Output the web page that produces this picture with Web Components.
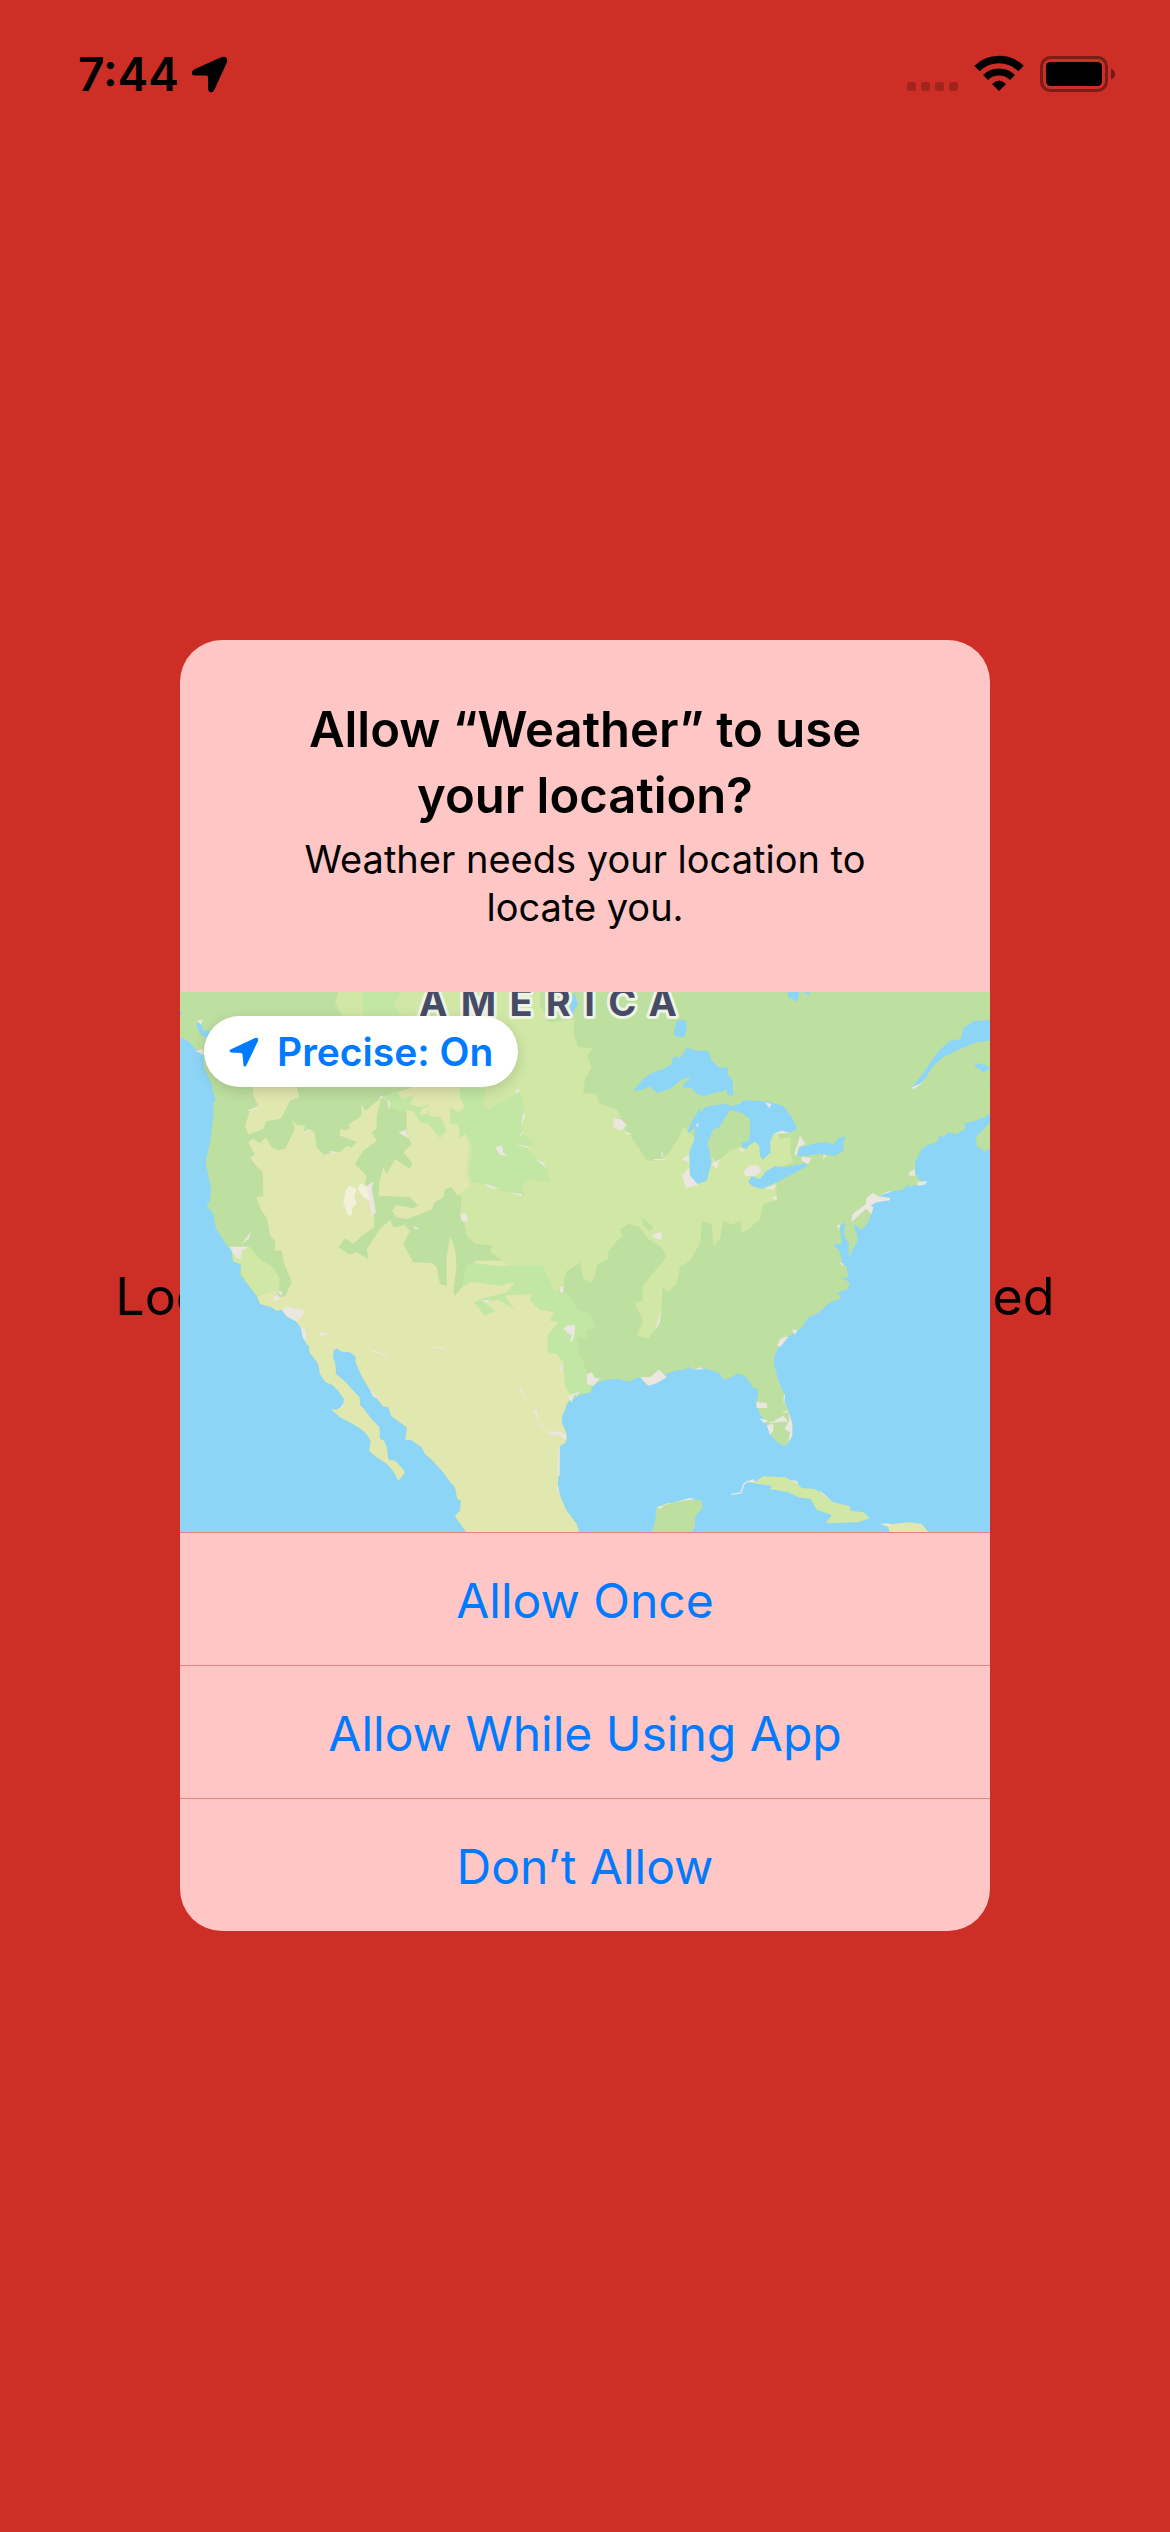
<!DOCTYPE html>
<html lang="en">
<head>
<meta charset="utf-8">
<meta name="viewport" content="width=device-width, initial-scale=1">
<title>Weather</title>
<style>
  body { margin: 0; font-family: Inter, "Liberation Sans", sans-serif; color: #000; background: #cd2f27; }
</style>
</head>
<body>
<weather-screen>
  <status-bar slot="status" time="7:44"></status-bar>
  <span slot="message">Location permission is not determined</span>
  <permission-alert slot="alert">
    <span slot="title">Allow “Weather” to use your location?</span>
    <span slot="detail">Weather needs your location to locate you.</span>
    <location-map slot="map"></location-map>
    <alert-action slot="actions">Allow Once</alert-action>
    <alert-action slot="actions">Allow While Using App</alert-action>
    <alert-action slot="actions">Don’t Allow</alert-action>
  </permission-alert>
</weather-screen>

<script>
const define = (name, html) => customElements.define(name, class extends HTMLElement {
  constructor() {
    super();
    const template = document.createElement('template');
    template.innerHTML = html;
    this.attachShadow({ mode: 'open' }).append(template.content.cloneNode(true));
    const time = this.shadowRoot.querySelector('time');
    if (time) time.textContent = this.getAttribute('time');
  }
});

define('weather-screen', `
<style>
  :host { display: flex; flex-direction: column; min-height: 100vh; }
  main { flex: 1; display: grid; place-items: center; padding-bottom: 102px; }
  .message, .alert { grid-area: 1 / 1; }
  .message { margin: 0; padding-top: 22px; font-size: 52px; line-height: 60px; text-align: center; white-space: nowrap; }
  .alert { width: 100%; max-width: 810px; z-index: 1; }
</style>
<slot name="status"></slot>
<main>
  <p class="message"><slot name="message"></slot></p>
  <div class="alert"><slot name="alert"></slot></div>
</main>`);

define('status-bar', `
<style>
  :host { display: block; }
  header { box-sizing: border-box; height: 141px; padding: 44px 54px 0 78px; display: flex; justify-content: space-between; align-items: flex-start; }
  .group { display: flex; align-items: center; height: 60px; }
  time { font-size: 46px; line-height: 60px; font-weight: 600; }
  .arrow { margin-left: 12px; }
  svg { display: block; }
</style>
<header>
  <div class="group">
    <time></time>
    <svg class="arrow" width="37" height="37" viewBox="0 0 37 37"><path d="M3 13.500 29.500 1.500Q37-1 36 6L23.500 33.500Q22 37 19 36 17 35.500 17 32V21Q17 19.500 15.500 19.500H4Q1 19.500.8 17 .8 14.500 3 13.500Z"/></svg>
  </div>
  <svg width="210" height="60" viewBox="906 44 210 60">
    <g fill="#000" fill-opacity=".21"><rect x="907" y="82" width="9" height="9" rx="2.500"/><rect x="921" y="82" width="9" height="9" rx="2.500"/><rect x="935" y="82" width="9" height="9" rx="2.500"/><rect x="949" y="82" width="9" height="9" rx="2.500"/></g>
    <g fill="none" stroke="#000"><path d="M977 68.500A31.500 31.500 0 0 1 1021 68.500" stroke-width="7.500"/><path d="M985.500 77.500A19.500 19.500 0 0 1 1012.500 77.500" stroke-width="7"/></g>
    <path d="M992 84Q999 77 1006 84L999 91Z"/>
    <rect x="1041.500" y="57.500" width="65" height="33" rx="9" fill="none" stroke="#000" stroke-opacity=".4" stroke-width="3"/>
    <rect x="1046" y="62" width="56" height="24" rx="4.500"/>
    <path d="M1111 68.500Q1115 70 1115 74T1111 79.500Z" fill-opacity=".45"/>
  </svg>
</header>`);

define('permission-alert', `
<style>
  :host { display: block; }
  section { border-radius: 42px; overflow: hidden; background: #fec6c4; }
  header { display: flex; flex-direction: column; align-items: center; gap: 6px; padding: 57px 24px 61px; text-align: center; }
  h1, p { margin: 0; max-width: 600px; }
  h1 { font-size: 49px; line-height: 66px; font-weight: 600; }
  p { font-size: 38px; line-height: 48px; }
</style>
<section role="alertdialog" aria-labelledby="title" aria-describedby="detail">
  <header>
    <h1 id="title"><slot name="title"></slot></h1>
    <p id="detail"><slot name="detail"></slot></p>
  </header>
  <slot name="map"></slot>
  <slot name="actions"></slot>
</section>`);

define('alert-action', `
<style>
  :host { display: block; }
  button { display: block; box-sizing: border-box; width: 100%; margin: 0; padding: 38px 24px 34px; border: 0; border-top: 1px solid #e28481; background: none; color: #007aff; font: inherit; font-size: 48px; line-height: 60px; }
</style>
<button type="button"><slot></slot></button>`);

define('location-map', `
<style>
  :host { display: grid; }
  svg.map { grid-area: 1 / 1; display: block; width: 100%; height: auto; }
  button { grid-area: 1 / 1; place-self: start; z-index: 1; display: flex; align-items: center; gap: 18px; margin: 24px; padding: 12px 25px; border: 0; border-radius: 36px; background: #fff; color: #007aff; box-shadow: 0 4px 14px rgb(0 0 0 / .14); font: inherit; font-size: 39px; line-height: 47px; font-weight: 600; }
</style>
<svg class="map" viewBox="0 9 2430 1620" role="img" aria-label="Map of North America">
  <rect y="9" width="2430" height="1620" fill="#8dd5f7"/>
  <path fill="#bddf9f" d="M0 9V145L28 158 50 185 70 197 72 235 95 285 98 305 108 333 100 338 100 380 95 420 92 450 77 520 85 560 94 600 90 635 80 650 100 675 108 720 138 765 155 785 158 815 183 826 180 858 200 882 228 918 240 945 275 955 290 965 305 962 320 982 350 998 365 1020 380 1065 388 1072 388 1090 415 1125 420 1155 437 1180 458 1188 475 1205 492 1230 490 1250 470 1262 453 1260 480 1285 515 1303 540 1318 560 1335 572 1355 568 1385 590 1405 618 1422 640 1447 655 1475 672 1455 673 1445 645 1415 625 1412 620 1375 612 1355 600 1350 598 1315 570 1285 550 1258 541 1250 538 1225 520 1205 497 1180 468 1155 466 1125 459 1105 460 1085 470 1078 485 1088 510 1090 527 1103 527 1120 545 1162 565 1195 590 1228 608 1252 625 1255 633 1280 660 1300 680 1315 680 1325 676 1352 693 1353 725 1375 735 1395 755 1412 790 1450 810 1478 825 1495 832 1530 843 1535 840 1565 825 1582 858 1629H1197L1190 1605 1160 1565 1142 1525 1133 1490 1137 1440 1138 1372 1155 1362 1160 1350 1158 1330 1145 1300 1146 1280 1155 1262 1160 1245 1180 1230 1200 1218 1232 1210 1240 1190 1258 1178 1275 1173 1310 1169 1350 1178 1365 1168 1385 1165 1400 1188 1430 1180 1450 1158 1485 1145 1520 1140 1525 1130 1530 1140 1570 1138 1600 1145 1620 1155 1632 1172 1650 1167 1670 1155 1685 1156 1700 1167 1718 1195 1733 1200 1735 1215 1728 1245 1740 1275 1762 1305 1770 1335 1790 1358 1812 1372 1825 1362 1837 1330 1837 1305 1825 1262 1812 1235 1813 1215 1795 1175 1782 1125 1782 1105 1795 1075 1825 1043 1867 1015 1885 985 1915 972 1950 940 1980 930 1982 920 1970 915 1985 905 2000 903 2010 885 1998 873 1980 870 2005 865 2000 835 1985 820 1985 808 2005 806 2033 755 2030 735 2020 705 2045 722 2065 700 2080 655 2070 645 2095 635 2130 632 2120 625 2095 622 2120 608 2165 603 2182 590 2185 580 2188 595 2215 585 2240 580 2220 575 2205 550 2205 520 2225 480 2242 469 2270 460 2280 437 2290 445 2305 430 2330 435 2355 420 2355 402 2395 393 2430 375V9Z"/>
  <path fill="#bddf9f" d="M2430 402 2405 425 2388 445 2390 470 2415 488 2430 478ZM1415 1629 1425 1600 1430 1555 1455 1545 1530 1530 1565 1535 1568 1555 1545 1585 1545 1610 1535 1629Z"/>
  <path fill="#d0e7a5" d="M1705 1480 1730 1475 1750 1462 1815 1465 1850 1482 1865 1497 1905 1500 1960 1540 2010 1552 2012 1565 2050 1570 2070 1588 2035 1600 1938 1603 1955 1578 1910 1562 1892 1530 1855 1525 1825 1510 1770 1500 1775 1490 1735 1485ZM155 785 190 775 210 775 240 810 280 835 300 870 295 910 230 918 200 882 183 850 183 826 160 818Z"/>
  <path fill="#e0e7af" d="M2100 1605 2135 1605 2190 1600 2225 1605 2245 1629H2128L2125 1615ZM220 295H350L358 325 330 335 310 375 300 390 258 397 250 420 205 437 195 410 210 365 235 350 220 320Z"/>
  <path fill="#e0e7af" d="M205 460 218 450 240 462 258 445 275 475 295 483 315 480 345 420 335 390 350 408 375 410 372 430 395 422 405 435 410 475 432 498 460 488 478 490 500 470 515 475 530 458 480 440 480 420 500 425 513 410 500 410 545 380 543 345 557 365 605 325 700 295H840L870 430 890 580 840 620 830 700 850 800 950 815H1130V930L1155 1090 1175 1220 1160 1245 1155 1262 1146 1280 1145 1300 1158 1330 1160 1350 1155 1362 1138 1372 1137 1440 1133 1490 1142 1525 1160 1565 1190 1605 1197 1629H858L825 1582 840 1565 843 1535 832 1530 825 1495 810 1478 790 1450 755 1412 735 1395 725 1375 693 1353 676 1352 680 1325 680 1315 660 1300 633 1280 625 1255 608 1252 590 1228 565 1195 545 1162 527 1120 527 1103 510 1090 485 1088 470 1078 460 1085 459 1105 466 1125 468 1155 497 1180 520 1205 538 1225 541 1250 550 1258 570 1285 598 1315 600 1350 612 1355 620 1375 625 1412 645 1415 673 1445 672 1455 655 1475 640 1447 618 1422 590 1405 568 1385 572 1355 560 1335 540 1318 515 1303 480 1285 453 1260 470 1262 490 1250 492 1230 475 1205 458 1188 437 1180 420 1155 415 1125 388 1090 388 1072 380 1065 365 1020 350 998 320 982 305 962 290 965 275 955 240 945 232 920 285 905 300 925 315 922 335 880 310 815 305 785 285 785 285 755 270 740 262 690 245 665 228 625 250 620 248 550 220 520 210 505 225 498Z"/>
  <path fill="#d0e7a5" d="M475 9 465 40 485 80 800 85 840 295 870 430 860 560 870 590 830 620 845 690 860 740 885 765 935 770 930 790 990 830 1100 830 1100 860 1130 905 1150 900 1155 850 1200 820 1210 870 1232 883 1245 860 1250 825 1285 810 1285 790 1320 745 1330 745 1320 720 1345 705 1375 712 1410 755 1440 770 1460 800 1450 815 1388 890 1388 935 1363 940 1390 995 1370 1040 1405 1048 1430 1015 1445 960 1447 895 1465 908 1490 885 1500 835 1530 815 1562 760 1565 695 1595 705 1600 770 1620 750 1630 695 1655 708 1680 695 1685 730 1700 725 1740 690 1750 645 1785 635 1790 600 1780 540 1840 520 1830 490 1832 445 1800 450 1790 425 1760 440 1650 485 1610 520 1530 430 1508 412 1500 440 1470 488 1440 515 1400 515 1385 490 1365 460 1340 425 1300 390 1325 385 1310 360 1260 345 1247 315 1210 312 1215 270 1235 235 1222 200 1240 178 1195 175 1180 130 1185 90 1110 100 1080 50 1080 9Z"/>
  <path fill="#c2e7a4" d="M545 9 550 80H665L640 45 665 9ZM810 355 835 370 855 352 840 325 840 295 915 300 910 345 925 360 1020 310 1035 370 1025 430 1060 465 1040 480 1100 530 1110 580 1045 570 1025 590 1035 620 960 605 920 585 875 580 865 540 880 480 855 435 840 450 835 405 810 405ZM610 325 650 305 665 330 700 320 690 345 720 355 750 345 745 380 780 385 790 400 800 425 780 448 745 405 720 400 700 365 650 365ZM845 895 860 820 950 830 1100 830 1100 860 1140 910 1170 920 1190 960 1230 975 1250 1015 1220 1025 1220 1050 1190 1045 1195 1085 1215 1130 1220 1155 1215 1170 1235 1190 1225 1212 1190 1215 1170 1215 1155 1190 1150 1120 1130 1095 1103 1090 1103 1040 1135 998 1108 995 1122 970 1080 962 1050 935 1055 915 975 920 1003 960 955 932 915 940 945 965 915 980 882 940 910 928 980 910 1005 878 960 890 920 885 875 878Z"/>
  <path fill="#e0e7af" d="M690 295H840L835 325 855 352 835 370 810 355 790 350 745 380 750 345 720 355 700 345 710 320ZM720 378 740 376 750 348 725 360Z"/>
  <path fill="#bddf9f" d="M605 325 650 365 680 365 680 440 695 465 670 490 697 522 690 540 645 510 620 555 610 535 598 580 595 620 690 625 715 650 700 658 650 648 635 665 650 685 680 690 755 662 765 638 790 625 795 600 815 595 830 615 845 625 840 680 855 710 860 740 885 765 935 770 930 790 950 800 935 815 890 815 860 830 845 895 825 920 820 905 830 830 825 780 810 740 800 805 800 890 780 885 770 835 755 822 700 820 670 765 690 725 675 708 640 715 630 692 600 720 560 780 565 810 530 790 510 797 475 775 495 748 520 765 548 738 583 715 580 620 555 585 560 560 525 525 550 485 590 455 575 430 590 420 590 380ZM1100 9V95L1185 88 1200 60 1170 9ZM1385 685 1420 715 1408 725 1390 710ZM1150 850 1170 845 1190 890 1160 900Z"/>
  <path fill="#d0e7a5" d="M1200 810H1285L1250 828 1245 860 1232 883 1215 870ZM1085 810H1200L1160 845 1150 880 1130 910 1100 860Z"/>
  <path fill="#8dd5f7" d="M1360 305 1390 270 1415 252 1450 240 1475 225 1478 208 1490 200 1495 210 1510 195 1520 175 1545 185 1585 185 1595 215 1620 237 1643 235 1643 255 1658 275 1660 320 1642 318 1640 303 1620 308 1600 312 1575 322 1550 315 1535 298 1507 295 1515 280 1535 265 1510 268 1470 300 1430 312 1410 292 1385 303ZM1522 427 1540 390 1560 358 1563 370 1575 355 1605 348 1640 345 1655 352 1680 345 1692 334 1755 337 1810 350 1835 385 1852 418 1835 430 1815 432 1810 422 1780 435 1770 460 1772 490 1748 513 1740 500 1738 470 1725 458 1705 470 1700 480 1685 475 1685 462 1705 455 1710 430 1710 390 1685 372 1650 362 1630 395 1618 415 1600 422 1583 460 1595 520 1580 575 1552 585 1530 560 1528 490 1543 450 1545 415 1525 432ZM1705 578 1715 562 1740 570 1760 545 1785 532 1815 535 1882 522 1875 535 1820 565 1780 585 1745 600 1715 590ZM1852 500 1860 475 1910 462 1945 460 1960 467 1975 447 1998 442 1990 460 1990 485 1965 500 1920 495 1865 502ZM1490 95 1515 92 1521 115 1513 145 1485 142 1482 128ZM1823 9H1858L1852 38 1825 25ZM1870 9H1888V22ZM1182 9 1194 45 1185 60 1175 92 1170 50ZM2195 295 2220 265 2235 245 2255 215 2275 187 2310 155 2342 150 2350 118 2380 97 2430 92V155L2390 160 2340 180 2290 205 2260 230 2235 270 2200 302ZM2382 230 2400 222 2430 235V240L2410 250ZM1980 710 1995 700 1992 740 2007 765 2005 812H1985L1980 790 1960 765 1985 765ZM48 105 62 95 70 125 95 125 85 150 60 135ZM0 65 8 72 0 80ZM2424 282 2430 279V288Z"/>
  <path fill="#ebe7e0" d="M52 95 70 90 62 107ZM47 187 68 180 72 198ZM185 765 212 728 208 748ZM148 773 208 773 185 785 183 810 170 808ZM560 590 580 578 575 600 588 670 575 680 567 635 545 620ZM600 320 612 325 600 330ZM625 335H630V358H625ZM655 430 678 422 682 447ZM695 710 717 718 708 722ZM1300 388 1323 390 1341 410 1320 425 1300 415ZM1003 312 1015 297 1020 308ZM1022 415 1030 368 1036 380ZM885 473 907 493ZM1005 465 1035 470 1060 480 1035 475ZM1065 510 1090 520 1102 540 1085 525ZM912 583 960 600 930 597ZM980 610 1025 615 1025 622ZM840 675 858 673 864 698 845 695ZM945 475 965 470 970 490 980 500 960 498ZM1412 740 1445 727V752L1430 750ZM1505 510 1527 498V522ZM1506 560 1527 535 1530 560 1555 588 1518 597ZM1595 525 1620 510 1610 540ZM1547 410 1556 400 1553 415ZM1755 340 1774 345 1768 358ZM1780 435 1805 425 1830 432ZM1673 480 1690 478 1690 490ZM1690 548 1710 528 1735 530 1745 545 1725 560 1697 562ZM1843 495 1860 440 1877 465 1855 475 1850 500ZM1865 503 1895 508 1885 525 1865 515ZM1930 498H1940L1930 512ZM1753 597 1788 587 1780 603ZM1772 625 1790 620V635ZM2013 700 2018 675 2058 645 2058 628 2078 612 2095 622 2120 608 2142 605 2095 622 2130 627 2130 634 2090 640 2070 650 2080 655 2075 675 2058 660 2025 690ZM1970 708 1982 707 1975 722ZM2187 550 2205 540V560L2188 560ZM2212 578 2242 577 2235 587 2212 590ZM2195 295 2230 280 2200 302ZM230 918 245 950ZM280 920 302 925 285 940ZM290 902 308 910 302 920ZM307 960 320 952 378 965 352 998 320 982ZM362 1012 378 1025 378 1060 368 1045ZM415 1038 425 1030 455 1035 420 1042ZM740 1075 785 1073 810 1085 780 1078ZM565 1190 590 1228 578 1222ZM480 1258 492 1240 488 1256ZM1150 1020 1160 1010 1185 1008V1030L1178 1055 1170 1060 1175 1040ZM1220 1155 1235 1150 1245 1167 1260 1168 1240 1190 1221 1185ZM1380 1165H1410L1437 1142 1460 1165 1430 1183 1405 1190ZM1540 1142 1560 1135 1572 1140ZM1140 895 1150 890V912L1140 908ZM1060 1262H1070L1080 1305ZM1098 1327 1140 1328 1160 1340 1155 1353 1135 1335 1115 1340ZM1135 1375H1139V1460H1133ZM1128 1500 1133 1485 1138 1510ZM1160 1222 1185 1212 1175 1240ZM1138 1130 1150 1130 1140 1150ZM1172 1208 1182 1215 1200 1207 1190 1220ZM1430 1555 1530 1527 1545 1530 1455 1545 1442 1560ZM1444 895V915L1440 925ZM1444 960 1440 1000 1425 1025ZM1978 820 1990 825 1985 830ZM1836 1020 1853 1025 1843 1037ZM1792 1070 1800 1050 1815 1043 1825 1043 1800 1075ZM1812 1215 1815 1220 1813 1243 1810 1235ZM1728 1240 1760 1242 1762 1257 1730 1257ZM1738 1288 1765 1295 1752 1303ZM1760 1308 1780 1305 1780 1325 1770 1338ZM1780 1297 1810 1280 1825 1298ZM1813 1320 1828 1295 1825 1265 1837 1305V1340L1825 1362 1830 1330ZM1700 1478 1720 1470 1727 1480ZM1830 1473 1850 1475 1857 1487ZM1917 1502 1955 1535 1925 1515ZM2100 1605 2125 1603 2140 1612ZM1654 1517 1685 1512ZM905 935 932 932 920 942Z"/>
  <path fill="#f3f0dc" d="M490 640 497 605 508 590 530 600 522 625 530 645 518 655 515 678 505 680 497 660ZM533 600 540 583 560 595 571 637 545 618Z"/>
  <path fill="none" stroke="#ebe7e0" stroke-width="4" d="M205 365 235 355M370 432 388 422M450 488 468 490M1028 430 1020 440M1335 430 1352 435M1420 512 1455 512M1445 490 1448 502M575 1085 622 1100M1080 1305 1090 1320M1654 1516 1682 1512 1692 1485 1705 1475M1770 1300 1800 1298M1810 1270 1822 1266M1018 1195 1035 1230"/>
  <text x="717" y="80" font-size="114" font-weight="700" letter-spacing="40" fill="#464c66" stroke="#eff3e6" stroke-width="18" stroke-linejoin="round" paint-order="stroke">AMERICA</text>
</svg>
<button type="button">
  <svg width="30" height="30" viewBox="0 0 30 30" aria-hidden="true"><path fill="#007aff" d="M1.500 12.500 26 1Q30 0 29 4L17.500 28Q16 31 14.500 28.500L13.500 17.500Q13.500 16 12 16L2 15.500Q-.8 14 1.500 12.500Z"/></svg>
  <span>Precise: On</span>
</button>`);
</script>
</body>
</html>
